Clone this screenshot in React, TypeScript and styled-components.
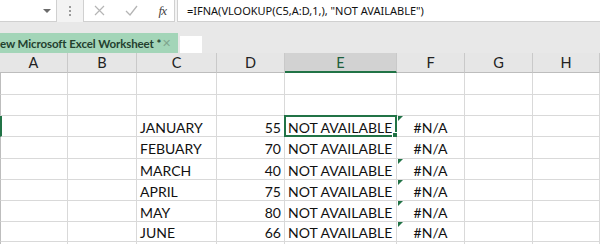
import React from "react";
import styled, { createGlobalStyle } from "styled-components";

const Global = createGlobalStyle`
  html, body { margin: 0; padding: 0; background: #e8e8e8; }
  body { width: 600px; height: 244px; overflow: hidden; }
`;

const Page = styled.div`
  width: 600px;
  height: 244px;
  overflow: hidden;
  display: flex;
  flex-direction: column;
  background: #e8e8e8;
  & > * { flex-shrink: 0; }
`;

const FormulaBar = styled.div`
  height: 22px;
  display: flex;
  align-items: stretch;
  background: #f3f3f3;
`;

const NameBox = styled.div`
  width: 57px;
  background: #ffffff;
  border-right: 1px solid #d0d0d0;
  border-bottom: 1px solid #d0d0d0;
  display: flex;
  align-items: center;
  justify-content: flex-end;
  padding-right: 5px;
  box-sizing: border-box;
`;

const Arrow = styled.div`
  width: 0;
  height: 0;
  border-left: 4px solid transparent;
  border-right: 4px solid transparent;
  border-top: 4px solid #6b6b6b;
`;

const Dots = styled.div`
  width: 26px;
  display: flex;
  flex-direction: column;
  align-items: center;
  justify-content: center;
  gap: 2px;
`;

const Dot = styled.span`
  width: 2px;
  height: 2px;
  background: #9a9a9a;
`;

const FnBox = styled.div`
  width: 92px;
  background: #ffffff;
  border: 1px solid #d0d0d0;
  border-top: none;
  box-sizing: border-box;
  display: flex;
  align-items: center;
  justify-content: space-between;
  padding: 0 8px 0 10px;
`;

const Fx = styled.span`
  font-family: "Liberation Serif", serif;
  font-style: italic;
  font-size: 13px;
  color: #444;
  letter-spacing: -1px;
`;

const FormulaInput = styled.div`
  flex: 1;
  margin-left: 2px;
  background: #ffffff;
  border-left: 1px solid #d0d0d0;
  border-bottom: 1px solid #d0d0d0;
  box-sizing: border-box;
  display: flex;
  align-items: center;
  padding-left: 9px;
  font-family: "Noto Sans", sans-serif;
  font-size: 11px;
  color: #111;
  white-space: nowrap;
`;

const Spacer = styled.div`
  height: 11px;
`;

const TabRow = styled.div`
  height: 20px;
  display: flex;
  align-items: flex-end;
  gap: 2px;
`;

const Tab = styled.div`
  width: 178px;
  height: 20px;
  background: #a3d5b8;
  display: flex;
  align-items: center;
  justify-content: space-between;
  padding-right: 7px;
  box-sizing: border-box;
  font-family: Lato, sans-serif;
  font-weight: 700;
  font-size: 11.5px;
  letter-spacing: -0.1px;
  color: #24402f;
  white-space: nowrap;
  overflow: hidden;
`;

const TabClose = styled.span`
  color: #7fa58e;
  font-size: 11px;
  font-weight: 400;
`;

const NewTab = styled.div`
  width: 22px;
  height: 17px;
  background: #ffffff;
`;

const Grid = styled.div`
  display: grid;
  grid-template-columns: 68px 69px 80px 68px 112px 68px 68px 67px;
  grid-template-rows: 20px 22px 21px 21px 22px 21px 21px 21px 20px 21px;
  font-family: Lato, sans-serif;
  font-size: 14px;
  color: #111;
`;

const Head = styled.div<{ $sel?: boolean }>`
  background: ${(p) => (p.$sel ? "#d2d2d2" : "#e6e6e6")};
  border-right: 1px solid #c9c9c9;
  border-bottom: ${(p) => (p.$sel ? "2px solid #217346" : "1px solid #bdbdbd")};
  box-sizing: border-box;
  display: flex;
  align-items: center;
  justify-content: center;
  font-family: Lato, sans-serif;
  font-size: 14.5px;
  color: ${(p) => (p.$sel ? "#1d5e3b" : "#222")};
`;

const Cell = styled.div<{ $align?: "left" | "right" | "center"; $first?: boolean; $rowSel?: boolean }>`
  position: relative;
  background: #ffffff;
  border-right: 1px solid #d9d9d9;
  border-bottom: 1px solid #d9d9d9;
  border-left: ${(p) => (p.$first ? (p.$rowSel ? "2px solid #217346" : "1px solid #bdbdbd") : "none")};
  box-sizing: border-box;
  display: flex;
  align-items: center;
  justify-content: ${(p) =>
    p.$align === "right" ? "flex-end" : p.$align === "center" ? "center" : "flex-start"};
  padding: 2px 3px 0 3px;
  white-space: nowrap;
`;

const Selection = styled.div`
  position: absolute;
  left: -1px;
  top: -1px;
  right: -1px;
  bottom: -1px;
  border: 2px solid #217346;
  pointer-events: none;
`;

const Handle = styled.div`
  position: absolute;
  right: -4px;
  bottom: -4px;
  width: 5px;
  height: 5px;
  background: #217346;
  border: 1px solid #ffffff;
`;

const ErrMark = styled.div`
  position: absolute;
  left: 1px;
  top: 0;
  width: 0;
  height: 0;
  border-top: 5px solid #217346;
  border-right: 5px solid transparent;
`;

const cols = ["A", "B", "C", "D", "E", "F", "G", "H"];

const data: [string, string][] = [
  ["JANUARY", "55"],
  ["FEBUARY", "70"],
  ["MARCH", "40"],
  ["APRIL", "75"],
  ["MAY", "80"],
  ["JUNE", "66"],
];

type RowData = { month?: string; num?: string; e?: string; f?: string; sel?: boolean; mark?: boolean };

const rows: RowData[] = [
  {},
  {},
  ...data.map(([m, n], i) => ({
    month: m,
    num: n,
    e: "NOT AVAILABLE",
    f: "#N/A",
    sel: i === 0,
    mark: i !== 1,
  })),
  {},
];

export default function App() {
  return (
    <Page>
      <Global />
      <FormulaBar>
        <NameBox>
          <Arrow />
        </NameBox>
        <Dots>
          <Dot />
          <Dot />
          <Dot />
        </Dots>
        <FnBox>
          <svg width="11" height="11" viewBox="0 0 11 11">
            <path d="M1 1 L10 10 M10 1 L1 10" stroke="#b5b5b5" strokeWidth="1.2" fill="none" />
          </svg>
          <svg width="13" height="11" viewBox="0 0 13 11">
            <path d="M1 6 L5 10 L12 1" stroke="#b5b5b5" strokeWidth="1.3" fill="none" />
          </svg>
          <Fx>fx</Fx>
        </FnBox>
        <FormulaInput>=IFNA(VLOOKUP(C5,A:D,1,), "NOT AVAILABLE")</FormulaInput>
      </FormulaBar>
      <Spacer />
      <TabRow>
        <Tab>
          <span>ew Microsoft Excel Worksheet *</span>
          <TabClose>✕</TabClose>
        </Tab>
        <NewTab />
      </TabRow>
      <Grid>
        {cols.map((c) => (
          <Head key={c} $sel={c === "E"}>
            {c}
          </Head>
        ))}
        {rows.map((r, ri) => (
          <React.Fragment key={ri}>
            <Cell $first $rowSel={r.sel} />
            <Cell />
            <Cell>{r.month}</Cell>
            <Cell $align="right">{r.num}</Cell>
            <Cell>
              {r.e}
              {r.sel && (
                <Selection>
                  <Handle />
                </Selection>
              )}
            </Cell>
            <Cell $align="center">
              {r.mark && <ErrMark />}
              {r.f}
            </Cell>
            <Cell />
            <Cell />
          </React.Fragment>
        ))}
      </Grid>
    </Page>
  );
}
